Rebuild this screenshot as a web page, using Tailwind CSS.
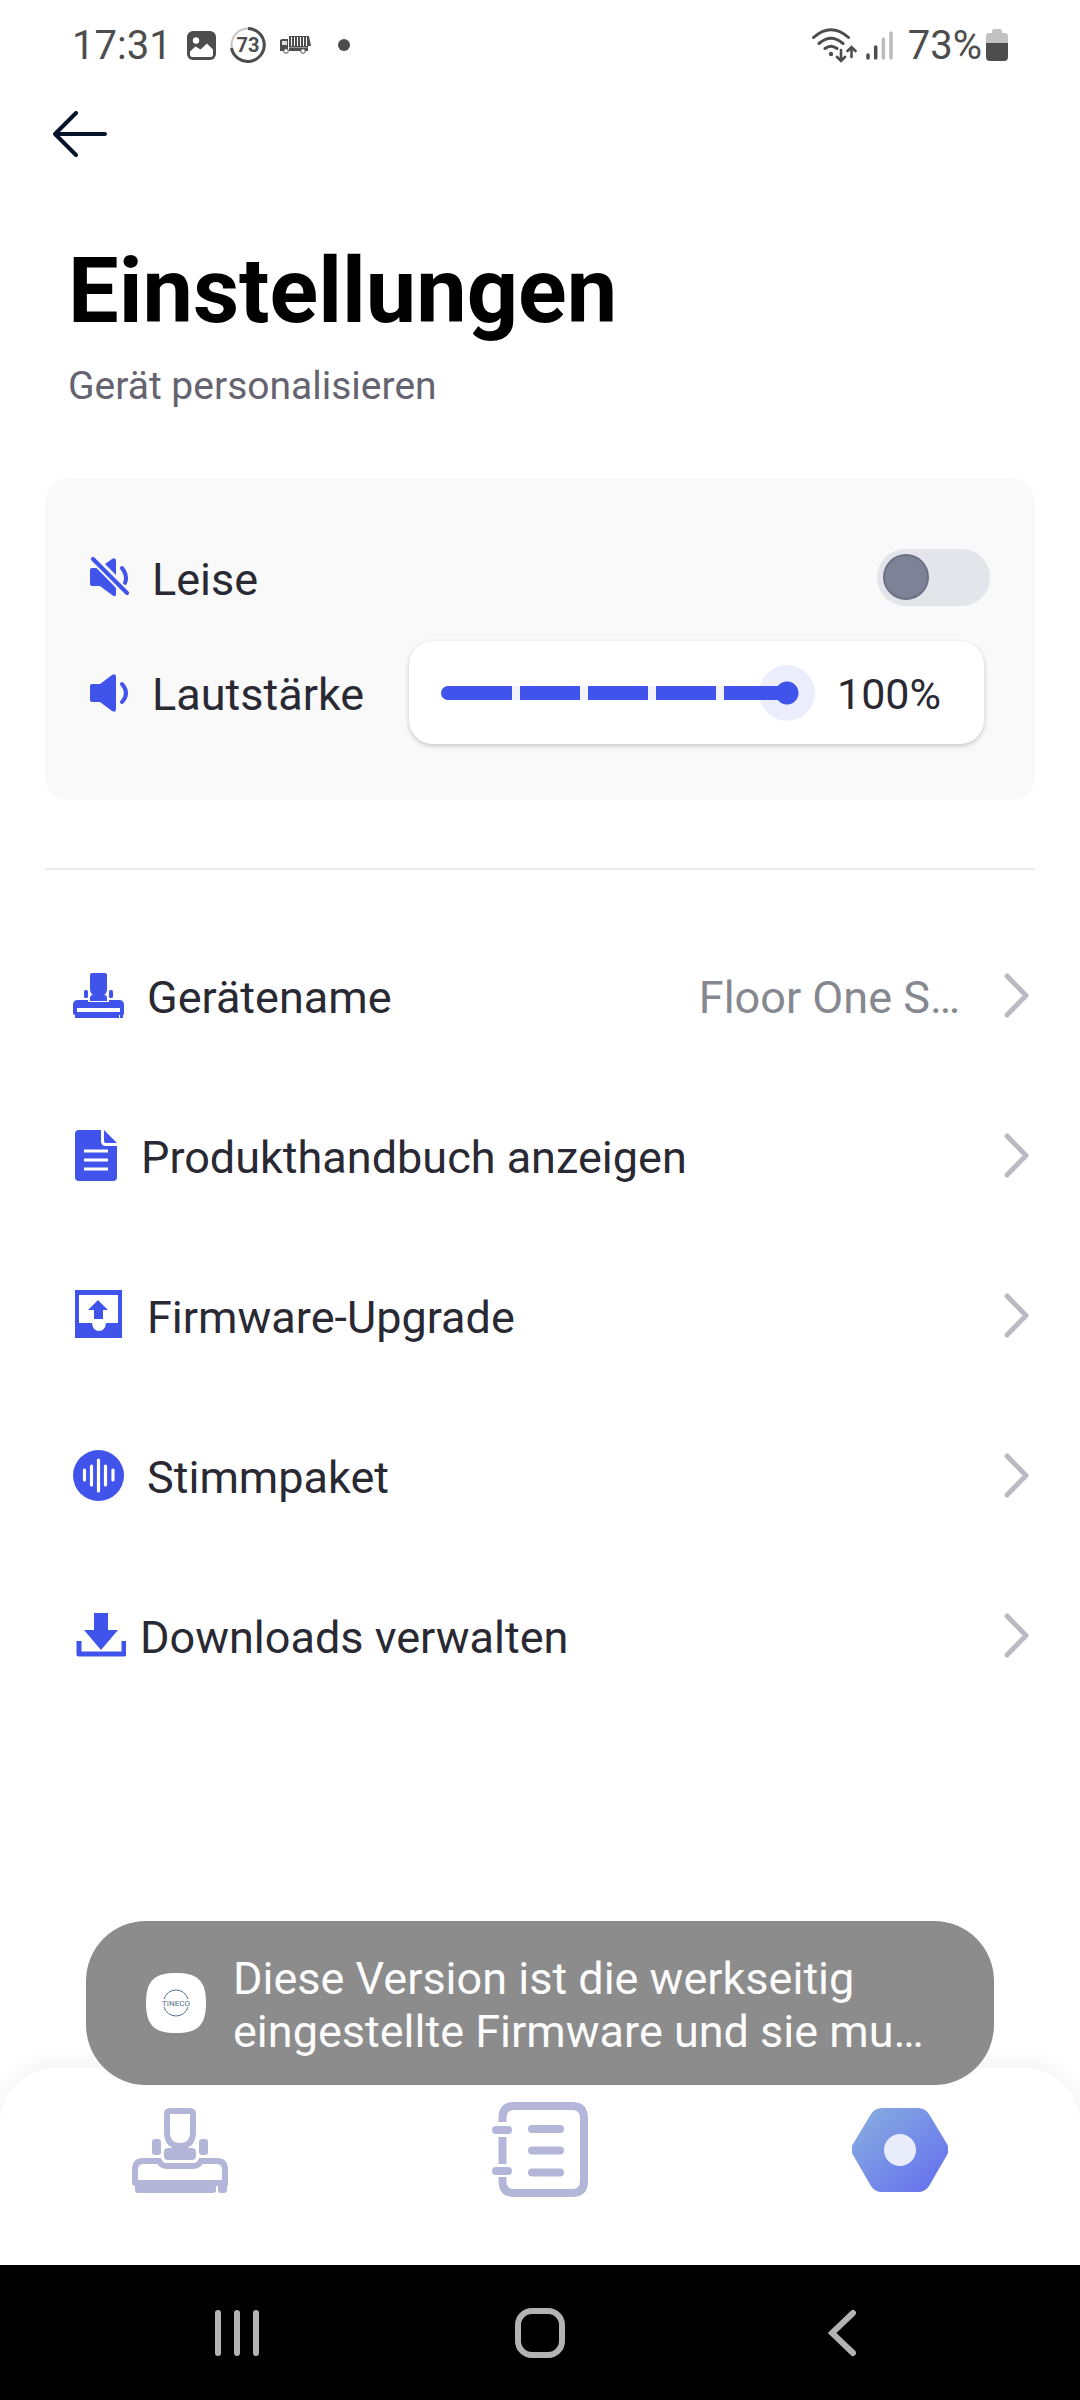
<!DOCTYPE html>
<html lang="de">
<head>
    <meta charset="UTF-8">
    <meta name="viewport" content="width=device-width, initial-scale=1.0">
    <title>Einstellungen</title>
    <script src="https://cdn.jsdelivr.net/npm/@tailwindcss/browser@4"></script>
</head>
<body class="min-h-screen flex flex-col bg-white font-[Roboto,sans-serif] text-[45px] leading-[53px] text-[#292933]">

    <!-- Statusleiste -->
    <div class="flex items-center justify-between h-[90px] px-[72px] text-[40px] text-[#4d4d4d]">
        <div class="flex items-center">
            <span class="mr-[15px]">17:31</span>
            <svg class="mr-[14px]" width="29" height="29" viewBox="0 0 29 29">
                <rect width="29" height="29" rx="6" fill="#4d4d4d"/>
                <circle cx="9" cy="9.500" r="3.200" fill="#fff"/>
                <path d="M3 20.500l5.500-5 5 3 6.500-6 6 6v5q0 2.500-2.500 2.500h-18Q3 26 3 23.500z" fill="#fff"/>
            </svg>
            <svg class="mr-[14px]" width="36" height="36" viewBox="0 0 36 36">
                <circle cx="18" cy="18" r="16.500" fill="none" stroke="#c4c4c4" stroke-width="2"/>
                <path d="M18 1.500A16.500 16.500 0 1 1 1.500 21" fill="none" stroke="#4d4d4d" stroke-width="3"/>
                <text x="18" y="25" text-anchor="middle" font-size="20" font-weight="700" fill="#4d4d4d">73</text>
            </svg>
            <svg class="mr-[26px]" width="32" height="18" viewBox="0 0 32 18">
                <path d="M0 15V4l2-1h6v12z" fill="#4d4d4d"/>
                <path d="M2 5h5v4H2z" fill="#ddd"/>
                <path d="M9 0h20l2 10h-3v5H9z" fill="#4d4d4d"/>
                <path d="M11.500 1v9M14.500 1v9M17.500 1v9M20.500 1v9M23.500 1v9M26.500 1v9" stroke="#fff"/>
                <path d="M9 11.500h18" stroke="#999"/>
                <circle cx="6" cy="15" r="2.300" fill="#fff" stroke="#4d4d4d"/>
                <circle cx="23" cy="15" r="2.300" fill="#fff" stroke="#4d4d4d"/>
            </svg>
            <span class="size-3 rounded-full bg-[#4d4d4d]"></span>
        </div>
        <div class="flex items-center">
            <svg class="mr-[9px]" width="45" height="35" viewBox="0 0 45 35" fill="none" stroke="#4d4d4d" stroke-width="3" stroke-linecap="round">
                <path d="M1.500 9.500Q19 -6 36.500 9.500M7 15.500Q19 5 31 15.500M13 20.500Q19 16 25 20.500"/>
                <circle cx="19" cy="26" r="2.200" fill="#4d4d4d" stroke="none"/>
                <path d="M29 22v10M25 29l4 4 4-4M39.500 29v-10M35.500 23l4-4 4 4" stroke-width="2.600"/>
            </svg>
            <svg class="mr-[14px]" width="28" height="31" viewBox="0 0 28 31" stroke-width="3.500" stroke-linecap="round">
                <path d="M2 25v3M9.700 17v11" stroke="#4d4d4d"/>
                <path d="M17.400 9v19M25 3v25" stroke="#bcbcbc"/>
            </svg>
            <span class="mr-1">73%</span>
            <svg width="22" height="32" viewBox="0 0 22 32">
                <path d="M6 2q0-2 2-2h6q2 0 2 2v2h3q3 0 3 3v8H0V7q0-3 3-3h3z" fill="#c1c1c1"/>
                <path d="M0 14h22v14q0 4-4 4H4q-4 0-4-4z" fill="#4d4d4d"/>
            </svg>
        </div>
    </div>

    <header class="flex items-center h-[88px] pl-[53px]">
        <button type="button" aria-label="Zurück">
            <svg width="55" height="46" viewBox="0 0 55 46" fill="none" stroke="#06142b" stroke-width="4" stroke-linecap="round" stroke-linejoin="round">
                <path d="M23 2L2 23l21 21M2 23h50"/>
            </svg>
        </button>
    </header>

    <main class="flex-1">
        <h1 class="mt-[61px] px-[68px] text-[90px] leading-[106px] font-bold text-black">Einstellungen</h1>
        <p class="mt-[18px] px-[68px] text-[39px] leading-[46px] text-[#666370]">Gerät personalisieren</p>

        <!-- Ton -->
        <section class="mt-[69px] mx-[45px] pt-[70px] pb-14 pl-[45px] rounded-3xl bg-[#f9f9f9]">
            <div class="flex items-center h-[58px] pr-[45px]">
                <svg width="40" height="40" viewBox="0 0 40 40" fill="#4054eb">
                    <path d="M2 11h5L26 31v6q0 4-4 1L10 29H2q-2 0-2-2V13q0-2 2-2z"/>
                    <path d="M15 7l7-5q4-2 4 2v14z"/>
                    <path d="M32 11q6 8 3 15" fill="none" stroke="#4054eb" stroke-width="4" stroke-linecap="round"/>
                    <path d="M3 2l34 34" stroke="#f9f9f9" stroke-width="8"/>
                    <path d="M3 2l34 34" stroke="#4054eb" stroke-width="4" stroke-linecap="round"/>
                </svg>
                <label for="mute" class="flex-1 ml-[22px] pt-1">Leise</label>
                <input id="mute" type="checkbox" role="switch" class="appearance-none flex items-center w-[113px] h-[57px] pl-[6px] rounded-full bg-[#e4e5ea] before:size-[46px] before:rounded-full before:bg-[#7d8296] before:border-2 before:border-[#6b7187] checked:justify-end">
            </div>
            <div class="flex items-center mt-[35px] pr-[51px]">
                <svg width="40" height="40" viewBox="0 0 40 40" fill="#4054eb">
                    <path d="M2 11h8l12-9q4-2 4 2v32q0 4-4 2l-12-9H2q-2 0-2-2V13q0-2 2-2z"/>
                    <path d="M32 11q8 9 0 18" fill="none" stroke="#4054eb" stroke-width="4" stroke-linecap="round"/>
                </svg>
                <label for="volume" class="flex-1 ml-[22px] pt-1">Lautstärke</label>
                <div class="flex items-center w-[575px] h-[103px] pl-8 pr-[43px] rounded-3xl bg-white shadow-[0_2px_5px_rgba(0,0,0,0.2)]">
                    <!-- Segmente und Regler teilen sich eine Zelle -->
                    <div class="grid flex-1 items-center">
                        <div class="col-start-1 row-start-1 flex gap-2 h-[14px] mr-7 rounded-l-full overflow-hidden bg-[#f3f4fb]">
                            <span class="w-[71px] bg-[#4054eb]"></span>
                            <span class="w-[60px] bg-[#4054eb]"></span>
                            <span class="w-[60px] bg-[#4054eb]"></span>
                            <span class="w-[60px] bg-[#4054eb]"></span>
                            <span class="flex-1 bg-[#4054eb]"></span>
                        </div>
                        <input id="volume" type="range" min="0" max="100" step="20" value="100" class="col-start-1 row-start-1 appearance-none w-full h-14 bg-transparent [&::-webkit-slider-thumb]:appearance-none [&::-webkit-slider-thumb]:size-14 [&::-webkit-slider-thumb]:rounded-full [&::-webkit-slider-thumb]:bg-[radial-gradient(circle,#4054eb_11px,#4054eb1a_12px)]">
                    </div>
                    <output for="volume" class="ml-[22px] pt-1 text-[43px]">100%</output>
                </div>
            </div>
        </section>

        <hr class="mt-[68px] mx-[45px] border-t-2 border-[#ebebef]">

        <nav class="mt-[47px]">
            <a href="#" class="flex items-center h-40 pl-[72px] pr-[50px]">
                <svg width="52" height="52" viewBox="0 0 52 52" fill="#4054eb">
                    <path d="M18 4q0-2 2-2h13q2 0 2 2v14q0 4-3 6 3 0 3 3v3H18v-3q0-3 3-3-3-2-3-6z"/>
                    <rect x="12" y="19" width="4" height="8" rx="1.500"/>
                    <rect x="37" y="19" width="4" height="8" rx="1.500"/>
                    <path d="M6 29h10v2h21v-2h10q5 0 5 5v9q0 1-1 1v3h-3v-3h-1v3H3v-3q-2 0-2-2v-8q0-5 5-5z"/>
                    <path d="M5 37h43v4H5z" fill="#fff"/>
                </svg>
                <span class="flex-1 ml-[23px]">Gerätename</span>
                <span class="mr-11 text-[#85888f]">Floor One S…</span>
                <svg width="26" height="48" viewBox="0 0 26 48" fill="none" stroke="#babac2" stroke-width="5" stroke-linecap="round" stroke-linejoin="round"><path d="M3 3l19 19.500L3 42"/></svg>
            </a>
            <a href="#" class="flex items-center h-40 pl-[72px] pr-[50px]">
                <svg width="52" height="54" viewBox="0 0 52 54" fill="#4054eb">
                    <path d="M7 0h22v11q0 5 5 5h11v31q0 4-4 4H7q-4 0-4-4V4q0-4 4-4z"/>
                    <path d="M32 0l13 13H34q-2 0-2-2z"/>
                    <path d="M12 21h24M12 30h24M12 39h24" stroke="#fff" stroke-width="3"/>
                </svg>
                <span class="flex-1 ml-[17px]">Produkthandbuch anzeigen</span>
                <svg width="26" height="48" viewBox="0 0 26 48" fill="none" stroke="#babac2" stroke-width="5" stroke-linecap="round" stroke-linejoin="round"><path d="M3 3l19 19.500L3 42"/></svg>
            </a>
            <a href="#" class="flex items-center h-40 pl-[72px] pr-[50px]">
                <svg width="52" height="54" viewBox="0 0 52 54" fill="#4054eb">
                    <path d="M3 0h47v48H3z"/>
                    <path d="M7 5h39v28H34q-1 8-7 8t-7-8H7z" fill="#fff"/>
                    <path d="M26 10l10 10h-5v9h-9v-9h-6z"/>
                </svg>
                <span class="flex-1 ml-[23px]">Firmware-Upgrade</span>
                <svg width="26" height="48" viewBox="0 0 26 48" fill="none" stroke="#babac2" stroke-width="5" stroke-linecap="round" stroke-linejoin="round"><path d="M3 3l19 19.500L3 42"/></svg>
            </a>
            <a href="#" class="flex items-center h-40 pl-[72px] pr-[50px]">
                <svg width="52" height="54" viewBox="0 0 52 54">
                    <circle cx="26.500" cy="25.500" r="25.500" fill="#4054eb"/>
                    <path d="M12.500 20v10M19.500 16v19M26.500 10v31M33.500 16v19M41 20v10" stroke="#fff" stroke-width="3.200" stroke-linecap="round"/>
                </svg>
                <span class="flex-1 ml-[23px]">Stimmpaket</span>
                <svg width="26" height="48" viewBox="0 0 26 48" fill="none" stroke="#babac2" stroke-width="5" stroke-linecap="round" stroke-linejoin="round"><path d="M3 3l19 19.500L3 42"/></svg>
            </a>
            <a href="#" class="flex items-center h-40 pl-[72px] pr-[50px]">
                <svg width="54" height="52" viewBox="0 0 54 52" fill="#4054eb">
                    <path d="M22 2h14v17h10L29 39 12 19h10z"/>
                    <path d="M7 30v13h45V30" fill="none" stroke="#4054eb" stroke-width="5" stroke-linejoin="round"/>
                </svg>
                <span class="flex-1 ml-[14px]">Downloads verwalten</span>
                <svg width="26" height="48" viewBox="0 0 26 48" fill="none" stroke="#babac2" stroke-width="5" stroke-linecap="round" stroke-linejoin="round"><path d="M3 3l19 19.500L3 42"/></svg>
            </a>
        </nav>
    </main>

    <footer class="relative">
        <!-- Hinweis über der Tab-Leiste -->
        <div role="status" class="absolute z-10 -top-[147px] inset-x-[86px] flex items-center h-[164px] pl-[60px] pr-14 rounded-[60px] bg-[#8c8c8c] text-[#fcfcfc]">
            <svg class="shrink-0" width="60" height="60" viewBox="0 0 60 60">
                <path d="M30 0C51 0 60 7 60 30S51 60 30 60 0 53 0 30 9 0 30 0z" fill="#fff"/>
                <path d="M18 26a12.500 12.500 0 0 1 24 0M18 34a12.500 12.500 0 0 0 24 0" fill="none" stroke="#56708f"/>
                <text x="30" y="33" text-anchor="middle" font-size="8" fill="#56708f">TINECO</text>
            </svg>
            <p class="ml-[27px] pt-1">Diese Version ist die werkseitig<br>eingestellte Firmware und sie mu…</p>
        </div>

        <nav class="grid grid-cols-3 h-[197px] pt-[33px] rounded-t-[56px] bg-white shadow-[0_-4px_24px_rgba(0,0,0,0.06)]">
            <a href="#" aria-label="Gerät" class="flex justify-center">
                <svg width="96" height="98" viewBox="0 0 96 98" fill="#b3b6d8">
                    <path d="M38 10h20q3 0 3 3v18q0 14-13 14T35 31V13q0-3 3-3z" fill="none" stroke="#b3b6d8" stroke-width="6"/>
                    <path d="M36 47h5v4h14v-4h5q4 0 4 4v4q0 4-4 4H36q-4 0-4-4v-4q0-4 4-4zM40 44h16v9H40z"/>
                    <rect x="20" y="38" width="9" height="16" rx="3"/>
                    <rect x="67" y="38" width="9" height="16" rx="3"/>
                    <path d="M3 82V69q0-9 8-9h16q2 5 8 5h26q6 0 8-5h16q8 0 8 9v13" fill="none" stroke="#b3b6d8" stroke-width="6"/>
                    <path d="M0 79h96v5q0 1-1 1v4q0 3-3 3h-3q-3 0-3-3v-4h-2v4q0 3-3 3H6q-3 0-3-3v-4q-3 0-3-3z"/>
                </svg>
            </a>
            <a href="#" aria-label="Protokoll" class="flex justify-center">
                <svg width="96" height="98" viewBox="0 0 96 98" fill="none" stroke="#b3b6d8" stroke-width="8">
                    <path d="M10.500 21v-4Q10.500 5 22.500 5H80q12 0 12 12v63q0 12-12 12H22.500Q10.500 92 10.500 80v-4M10.500 36v27"/>
                    <path d="M4 29h12M4 70h12M40 28h28M40 49.500h28M40 71.500h28" stroke-linecap="round"/>
                </svg>
            </a>
            <a href="#" aria-label="Einstellungen" class="flex justify-center">
                <svg width="96" height="98" viewBox="0 0 96 98">
                    <defs>
                        <linearGradient id="hex" x1="0" y1="0" x2="1" y2="1">
                            <stop offset="0.100" stop-color="#86aae0"/>
                            <stop offset="0.900" stop-color="#6673ee"/>
                        </linearGradient>
                    </defs>
                    <path d="M30 7h36q7 0 11 6l18 30q3 6 0 11L77 85q-4 6-11 6H30q-7 0-11-6L1 54q-3-6 0-11l18-30q4-6 11-6z" fill="url(#hex)"/>
                    <circle cx="48" cy="49" r="16" fill="#e9ecfb"/>
                </svg>
            </a>
        </nav>

        <!-- Systemnavigation -->
        <div class="h-[135px] px-[86px] grid grid-cols-3 place-items-center bg-black">
            <button type="button" aria-label="Letzte Apps">
                <svg width="46" height="50" viewBox="0 0 46 50" stroke="#b3b3b3" stroke-width="6" stroke-linecap="round"><path d="M4 5v40M23 5v40M42 5v40"/></svg>
            </button>
            <button type="button" aria-label="Startseite">
                <svg width="50" height="50" viewBox="0 0 50 50" fill="none" stroke="#b3b3b3" stroke-width="6"><rect x="3" y="3" width="44" height="44" rx="14"/></svg>
            </button>
            <button type="button" aria-label="Zurück">
                <svg width="30" height="50" viewBox="0 0 30 50" fill="none" stroke="#b3b3b3" stroke-width="6" stroke-linecap="round"><path d="M25 5L4 25l21 20"/></svg>
            </button>
        </div>
    </footer>

    <script>
        const volume = document.getElementById('volume');
        const output = document.querySelector('output');

        volume.addEventListener('input', () => {
            output.textContent = volume.value + '%';
        });
    </script>
</body>
</html>
